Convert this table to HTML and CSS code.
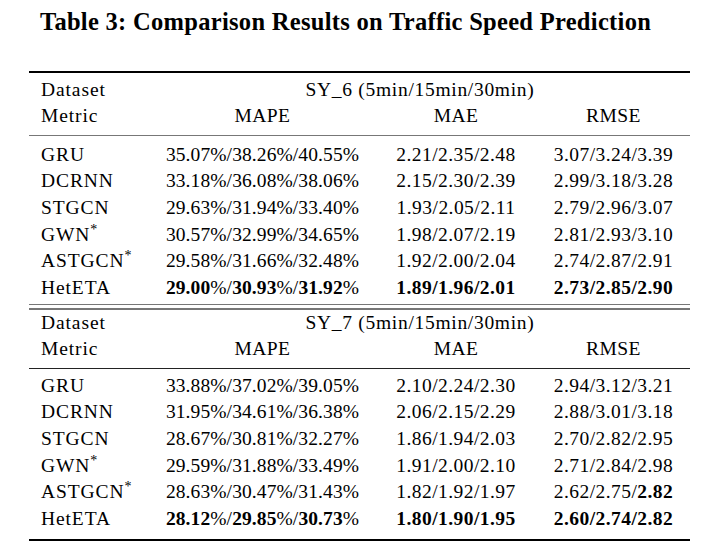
FILE: index.html
```html
<!DOCTYPE html>
<html>
<head>
<meta charset="utf-8">
<link rel="stylesheet" href="styles.css">
</head>
<body>
<div class="page">
  <h1 class="title">Table 3: Comparison Results on Traffic Speed Prediction</h1>
  <div class="tbl">
    <div class="rule-top"></div>
    <div class="gap g-top"></div>
    <div class="row"><div class="c1">Dataset</div><div class="span">SY_6 (5min/15min/30min)</div></div>
    <div class="row head"><div class="c1">Metric</div><div class="c">MAPE</div><div class="c">MAE</div><div class="c">RMSE</div></div>
    <div class="gap g-mid"></div>
    <div class="rule-mid"></div>
    <div class="gap g-mid"></div>
    <div class="row"><div class="c1">GRU</div><div class="c">35.07%/38.26%/40.55%</div><div class="c">2.21/2.35/2.48</div><div class="c">3.07/3.24/3.39</div></div>
    <div class="row"><div class="c1">DCRNN</div><div class="c">33.18%/36.08%/38.06%</div><div class="c">2.15/2.30/2.39</div><div class="c">2.99/3.18/3.28</div></div>
    <div class="row"><div class="c1">STGCN</div><div class="c">29.63%/31.94%/33.40%</div><div class="c">1.93/2.05/2.11</div><div class="c">2.79/2.96/3.07</div></div>
    <div class="row"><div class="c1">GWN<sup>*</sup></div><div class="c">30.57%/32.99%/34.65%</div><div class="c">1.98/2.07/2.19</div><div class="c">2.81/2.93/3.10</div></div>
    <div class="row"><div class="c1">ASTGCN<sup>*</sup></div><div class="c">29.58%/31.66%/32.48%</div><div class="c">1.92/2.00/2.04</div><div class="c">2.74/2.87/2.91</div></div>
    <div class="row"><div class="c1">HetETA</div><div class="c"><b>29.00</b>%/<b>30.93</b>%/<b>31.92</b>%</div><div class="c"><b>1.89/1.96/2.01</b></div><div class="c"><b>2.73/2.85/2.90</b></div></div>
    <div class="gap g-dbl"></div>
    <div class="rule-mid"></div>
    <div class="gap g-dbl2"></div>
    <div class="rule-mid"></div>
    <div class="row"><div class="c1">Dataset</div><div class="span">SY_7 (5min/15min/30min)</div></div>
    <div class="row head"><div class="c1">Metric</div><div class="c">MAPE</div><div class="c">MAE</div><div class="c">RMSE</div></div>
    <div class="gap g-mid"></div>
    <div class="rule-mid dark"></div>
    <div class="gap g-mid2"></div>
    <div class="row"><div class="c1">GRU</div><div class="c">33.88%/37.02%/39.05%</div><div class="c">2.10/2.24/2.30</div><div class="c">2.94/3.12/3.21</div></div>
    <div class="row"><div class="c1">DCRNN</div><div class="c">31.95%/34.61%/36.38%</div><div class="c">2.06/2.15/2.29</div><div class="c">2.88/3.01/3.18</div></div>
    <div class="row"><div class="c1">STGCN</div><div class="c">28.67%/30.81%/32.27%</div><div class="c">1.86/1.94/2.03</div><div class="c">2.70/2.82/2.95</div></div>
    <div class="row"><div class="c1">GWN<sup>*</sup></div><div class="c">29.59%/31.88%/33.49%</div><div class="c">1.91/2.00/2.10</div><div class="c">2.71/2.84/2.98</div></div>
    <div class="row"><div class="c1">ASTGCN<sup>*</sup></div><div class="c">28.63%/30.47%/31.43%</div><div class="c">1.82/1.92/1.97</div><div class="c">2.62/2.75/<b>2.82</b></div></div>
    <div class="row"><div class="c1">HetETA</div><div class="c"><b>28.12</b>%/<b>29.85</b>%/<b>30.73</b>%</div><div class="c"><b>1.80/1.90/1.95</b></div><div class="c"><b>2.60/2.74/2.82</b></div></div>
    <div class="gap g-bot"></div>
    <div class="rule-top"></div>
  </div>
</div>
</body>
</html>
```

FILE: styles.css
```css
html, body {
  margin: 0;
  padding: 0;
  background: #fff;
  color: #000;
  font-family: "Liberation Serif", "Times New Roman", serif;
}
.page {
  padding: 8px 0 0 29px;
}
.title {
  margin: 0 0 0 11px;
  font-size: 24.5px;
  line-height: 28px;
  font-weight: bold;
  letter-spacing: 0.3px;
}
.tbl {
  width: 661px;
  margin-top: 35px;
  font-size: 19.5px;
}
.rule-top {
  height: 1.5px;
  background: #000;
}
.rule-mid {
  height: 1.2px;
  background: #777;
}
.rule-mid.dark {
  background: #222;
}
.gap.g-top { height: 4px; }
.gap.g-mid { height: 5.5px; }
.gap.g-mid2 { height: 3.5px; }
.gap.g-dbl { height: 2.2px; }
.gap.g-dbl2 { height: 3.5px; }
.gap.g-bot { height: 7px; }
.row {
  display: grid;
  grid-template-columns: 121px 225px 162px 153px;
  height: 26.6px;
  line-height: 26.6px;
  white-space: nowrap;
}
.c1 {
  padding-left: 12px;
  letter-spacing: 0.9px;
}
.c {
  text-align: center;
  letter-spacing: 0.1px;
}
.row .c:nth-child(n+3) {
  letter-spacing: 0.45px;
}
.head .c {
  letter-spacing: 0.4px;
}
.span {
  grid-column: 2 / 5;
  text-align: center;
  letter-spacing: 0.7px;
}
sup {
  font-size: 0.72em;
  line-height: 0;
  vertical-align: 0.5em;
  letter-spacing: 0;
}
b {
  font-weight: bold;
}
```
